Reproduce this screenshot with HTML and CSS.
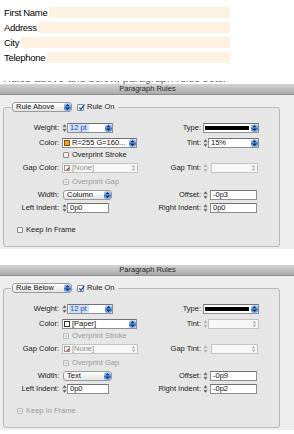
FILE: index.html
```html
<!DOCTYPE html>
<html>
<head>
<meta charset="utf-8">
<title>Paragraph Rules</title>
<link rel="stylesheet" href="styles.css">
</head>
<body>
<div class="form">
  <div class="frow"><span class="flabel">First Name</span><span class="ffield"></span></div>
  <div class="frow"><span class="flabel">Address</span><span class="ffield"></span></div>
  <div class="frow"><span class="flabel">City</span><span class="ffield"></span></div>
  <div class="frow"><span class="flabel">Telephone</span><span class="ffield"></span></div>
</div>
<div class="cutline"><span>Rules above and below, paragraph rules settings for the form</span></div>

<section class="dialog">
  <div class="titlebar">Paragraph Rules</div>
  <div class="dbody">
    <fieldset class="group">
      <legend class="legend"><div class="legend-in">
        <span class="popup w-rule"><span class="ptext">Rule Above</span><span class="stepper"><svg viewBox="0 0 7 8" width="7" height="8"><path d="M3.5 1L5.6 3.3H1.4Z M3.5 7L5.6 4.7H1.4Z" fill="#0e2656"/></svg></span></span>
        <span class="cb cb-big"><svg viewBox="0 0 7 7" width="7" height="7"><path d="M1.3 3.4L2.9 5.4L6.4 0.6" stroke="#1d56ba" stroke-width="1.3" fill="none"/></svg></span><span class="cbl">Rule On</span>
      </div></legend>
      <div class="grid">
        <span class="lbl">Weight:</span>
        <div class="ctl"><svg class="spin" viewBox="0 0 5 10" width="5" height="10"><path d="M2.5 1.2L4.4 3.7H0.6Z M2.5 8.8L4.4 6.3H0.6Z" fill="#555"/><path d="M0 5H5" stroke="#aaa" stroke-width="0.6"/></svg><span class="field w-46"><span class="sel">12 pt</span><span class="stepper"><svg viewBox="0 0 7 8" width="7" height="8"><path d="M3.5 1L5.6 3.3H1.4Z M3.5 7L5.6 4.7H1.4Z" fill="#0e2656"/></svg></span></span></div>
        <span class="lbl r">Type:</span>
        <div class="ctl"><span class="field w-56"><span class="typeline"></span><span class="stepper"><svg viewBox="0 0 7 8" width="7" height="8"><path d="M3.5 1L5.6 3.3H1.4Z M3.5 7L5.6 4.7H1.4Z" fill="#0e2656"/></svg></span></span></div>

        <span class="lbl">Color:</span>
        <div class="ctl"><span class="field w-75"><span class="swatch sw-orange"></span><span class="ftext">R=255 G=160...</span><span class="stepper"><svg viewBox="0 0 7 8" width="7" height="8"><path d="M3.5 1L5.6 3.3H1.4Z M3.5 7L5.6 4.7H1.4Z" fill="#0e2656"/></svg></span></span></div>
        <span class="lbl r">Tint:</span>
        <div class="ctl"><svg class="spin" viewBox="0 0 5 10" width="5" height="10"><path d="M2.5 1.2L4.4 3.7H0.6Z M2.5 8.8L4.4 6.3H0.6Z" fill="#555"/><path d="M0 5H5" stroke="#aaa" stroke-width="0.6"/></svg><span class="field w-50"><span class="ftext">15%</span><span class="stepper"><svg viewBox="0 0 7 8" width="7" height="8"><path d="M3.5 1L5.6 3.3H1.4Z M3.5 7L5.6 4.7H1.4Z" fill="#0e2656"/></svg></span></span></div>

        <div class="chk rowspan"><span class="cb"></span><span class="cbl">Overprint Stroke</span></div>

        <span class="lbl">Gap Color:</span>
        <div class="ctl"><span class="field dis w-76"><span class="swatch sw-none"><svg viewBox="0 0 6 6" width="6" height="6"><path d="M0.3 5.7L5.7 0.3" stroke="#e0262b" stroke-width="1.4"/></svg></span><span class="ftext">[None]</span><svg class="dstep" viewBox="0 0 5 8" width="5" height="8"><path d="M2.5 1L4.2 3.2H0.8Z M2.5 7L4.2 4.8H0.8Z" fill="#a5a5a5"/></svg></span></div>
        <span class="lbl r">Gap Tint:</span>
        <div class="ctl"><svg class="spin" viewBox="0 0 5 10" width="5" height="10"><path d="M2.5 1.2L4.4 3.7H0.6Z M2.5 8.8L4.4 6.3H0.6Z" fill="#aaa"/><path d="M0 5H5" stroke="#ccc" stroke-width="0.6"/></svg><span class="field dis w-47 ml3"><span class="ftext"></span><svg class="dstep" viewBox="0 0 5 8" width="5" height="8"><path d="M2.5 1L4.2 3.2H0.8Z M2.5 7L4.2 4.8H0.8Z" fill="#a5a5a5"/></svg></span></div>

        <div class="chk rowspan disabled"><span class="cb cb-dis"><svg viewBox="0 0 6 6" width="6" height="6"><path d="M1.5 3H4.5" stroke="#a0a0a0" stroke-width="0.8"/></svg></span><span class="cbl">Overprint Gap</span></div>

        <span class="lbl">Width:</span>
        <div class="ctl"><span class="popup w-49"><span class="ptext">Column</span><span class="stepper"><svg viewBox="0 0 7 8" width="7" height="8"><path d="M3.5 1L5.6 3.3H1.4Z M3.5 7L5.6 4.7H1.4Z" fill="#0e2656"/></svg></span></span></div>
        <span class="lbl r">Offset:</span>
        <div class="ctl"><svg class="spin" viewBox="0 0 5 10" width="5" height="10"><path d="M2.5 1.2L4.4 3.7H0.6Z M2.5 8.8L4.4 6.3H0.6Z" fill="#555"/><path d="M0 5H5" stroke="#aaa" stroke-width="0.6"/></svg><span class="field w-47 ml2"><span class="ftext">-0p3</span></span></div>

        <span class="lbl">Left Indent:</span>
        <div class="ctl"><svg class="spin" viewBox="0 0 5 10" width="5" height="10"><path d="M2.5 1.2L4.4 3.7H0.6Z M2.5 8.8L4.4 6.3H0.6Z" fill="#555"/><path d="M0 5H5" stroke="#aaa" stroke-width="0.6"/></svg><span class="field w-42"><span class="ftext">0p0</span></span></div>
        <span class="lbl r">Right Indent:</span>
        <div class="ctl"><svg class="spin" viewBox="0 0 5 10" width="5" height="10"><path d="M2.5 1.2L4.4 3.7H0.6Z M2.5 8.8L4.4 6.3H0.6Z" fill="#555"/><path d="M0 5H5" stroke="#aaa" stroke-width="0.6"/></svg><span class="field w-47 ml2"><span class="ftext">0p0</span></span></div>
      </div>
      <div class="keep"><span class="cb"></span><span class="cbl">Keep In Frame</span></div>
    </fieldset>
  </div>
</section>

<section class="dialog second">
  <div class="titlebar">Paragraph Rules</div>
  <div class="dbody">
    <fieldset class="group">
      <legend class="legend"><div class="legend-in">
        <span class="popup w-rule"><span class="ptext">Rule Below</span><span class="stepper"><svg viewBox="0 0 7 8" width="7" height="8"><path d="M3.5 1L5.6 3.3H1.4Z M3.5 7L5.6 4.7H1.4Z" fill="#0e2656"/></svg></span></span>
        <span class="cb cb-big"><svg viewBox="0 0 7 7" width="7" height="7"><path d="M1.3 3.4L2.9 5.4L6.4 0.6" stroke="#1d56ba" stroke-width="1.3" fill="none"/></svg></span><span class="cbl">Rule On</span>
      </div></legend>
      <div class="grid">
        <span class="lbl">Weight:</span>
        <div class="ctl"><svg class="spin" viewBox="0 0 5 10" width="5" height="10"><path d="M2.5 1.2L4.4 3.7H0.6Z M2.5 8.8L4.4 6.3H0.6Z" fill="#555"/><path d="M0 5H5" stroke="#aaa" stroke-width="0.6"/></svg><span class="field w-46"><span class="sel">12 pt</span><span class="stepper"><svg viewBox="0 0 7 8" width="7" height="8"><path d="M3.5 1L5.6 3.3H1.4Z M3.5 7L5.6 4.7H1.4Z" fill="#0e2656"/></svg></span></span></div>
        <span class="lbl r">Type:</span>
        <div class="ctl"><span class="field w-56"><span class="typeline"></span><span class="stepper"><svg viewBox="0 0 7 8" width="7" height="8"><path d="M3.5 1L5.6 3.3H1.4Z M3.5 7L5.6 4.7H1.4Z" fill="#0e2656"/></svg></span></span></div>

        <span class="lbl">Color:</span>
        <div class="ctl"><span class="field w-75"><span class="swatch sw-paper"></span><span class="ftext">[Paper]</span><span class="stepper"><svg viewBox="0 0 7 8" width="7" height="8"><path d="M3.5 1L5.6 3.3H1.4Z M3.5 7L5.6 4.7H1.4Z" fill="#0e2656"/></svg></span></span></div>
        <span class="lbl r">Tint:</span>
        <div class="ctl"><svg class="spin" viewBox="0 0 5 10" width="5" height="10"><path d="M2.5 1.2L4.4 3.7H0.6Z M2.5 8.8L4.4 6.3H0.6Z" fill="#aaa"/><path d="M0 5H5" stroke="#ccc" stroke-width="0.6"/></svg><span class="field dis w-50"><span class="ftext"></span><svg class="dstep" viewBox="0 0 5 8" width="5" height="8"><path d="M2.5 1L4.2 3.2H0.8Z M2.5 7L4.2 4.8H0.8Z" fill="#a5a5a5"/></svg></span></div>

        <div class="chk rowspan disabled"><span class="cb cb-dis"><svg viewBox="0 0 6 6" width="6" height="6"><path d="M1.5 3H4.5" stroke="#a0a0a0" stroke-width="0.8"/></svg></span><span class="cbl">Overprint Stroke</span></div>

        <span class="lbl">Gap Color:</span>
        <div class="ctl"><span class="field dis w-76"><span class="swatch sw-none"><svg viewBox="0 0 6 6" width="6" height="6"><path d="M0.3 5.7L5.7 0.3" stroke="#e0262b" stroke-width="1.4"/></svg></span><span class="ftext">[None]</span><svg class="dstep" viewBox="0 0 5 8" width="5" height="8"><path d="M2.5 1L4.2 3.2H0.8Z M2.5 7L4.2 4.8H0.8Z" fill="#a5a5a5"/></svg></span></div>
        <span class="lbl r">Gap Tint:</span>
        <div class="ctl"><svg class="spin" viewBox="0 0 5 10" width="5" height="10"><path d="M2.5 1.2L4.4 3.7H0.6Z M2.5 8.8L4.4 6.3H0.6Z" fill="#aaa"/><path d="M0 5H5" stroke="#ccc" stroke-width="0.6"/></svg><span class="field dis w-47 ml3"><span class="ftext"></span><svg class="dstep" viewBox="0 0 5 8" width="5" height="8"><path d="M2.5 1L4.2 3.2H0.8Z M2.5 7L4.2 4.8H0.8Z" fill="#a5a5a5"/></svg></span></div>

        <div class="chk rowspan disabled"><span class="cb cb-dis"><svg viewBox="0 0 6 6" width="6" height="6"><path d="M1.5 3H4.5" stroke="#a0a0a0" stroke-width="0.8"/></svg></span><span class="cbl">Overprint Gap</span></div>

        <span class="lbl">Width:</span>
        <div class="ctl"><span class="popup w-49"><span class="ptext">Text</span><span class="stepper"><svg viewBox="0 0 7 8" width="7" height="8"><path d="M3.5 1L5.6 3.3H1.4Z M3.5 7L5.6 4.7H1.4Z" fill="#0e2656"/></svg></span></span></div>
        <span class="lbl r">Offset:</span>
        <div class="ctl"><svg class="spin" viewBox="0 0 5 10" width="5" height="10"><path d="M2.5 1.2L4.4 3.7H0.6Z M2.5 8.8L4.4 6.3H0.6Z" fill="#555"/><path d="M0 5H5" stroke="#aaa" stroke-width="0.6"/></svg><span class="field w-47 ml2"><span class="ftext">-0p9</span></span></div>

        <span class="lbl">Left Indent:</span>
        <div class="ctl"><svg class="spin" viewBox="0 0 5 10" width="5" height="10"><path d="M2.5 1.2L4.4 3.7H0.6Z M2.5 8.8L4.4 6.3H0.6Z" fill="#555"/><path d="M0 5H5" stroke="#aaa" stroke-width="0.6"/></svg><span class="field w-42"><span class="ftext">0p0</span></span></div>
        <span class="lbl r">Right Indent:</span>
        <div class="ctl"><svg class="spin" viewBox="0 0 5 10" width="5" height="10"><path d="M2.5 1.2L4.4 3.7H0.6Z M2.5 8.8L4.4 6.3H0.6Z" fill="#555"/><path d="M0 5H5" stroke="#aaa" stroke-width="0.6"/></svg><span class="field w-47 ml2"><span class="ftext">-0p2</span></span></div>
      </div>
      <div class="keep disabled"><span class="cb cb-dis"><svg viewBox="0 0 6 6" width="6" height="6"><path d="M1.5 3H4.5" stroke="#a0a0a0" stroke-width="0.8"/></svg></span><span class="cbl">Keep In Frame</span></div>
    </fieldset>
  </div>
</section>
</body>
</html>
```

FILE: styles.css
```css
* { box-sizing: border-box; }
html, body { margin: 0; padding: 0; }
body {
  background: #fff;
  font-family: "Liberation Sans", Arial, sans-serif;
  width: 294px;
  height: 434px;
  overflow: hidden;
}

/* top form */
.form {
  padding: 7px 0 0 4px;
  width: 230px;
  display: flex;
  flex-direction: column;
  gap: 4px;
}
.frow { display: flex; height: 11px; align-items: center; gap: 2px; }
.flabel {
  font-size: 9.5px;
  letter-spacing: -0.3px;
  line-height: 11px;
  color: #000;
  white-space: nowrap;
}
.ffield { flex: 1; height: 11px; background: #fdf1e1; }

/* clipped line of text above the first dialog */
.cutline {
  margin-top: 18px;
  height: 3px;
  width: 228px;
  overflow: hidden;
  padding-left: 3px;
}
.cutline span {
  display: block;
  height: 14px;
  font-size: 11px;
  line-height: 11px;
  margin-top: -8px;
  color: #666;
  white-space: nowrap;
}

/* dialog */
.dialog { background: #eeeeee; }
.dialog.second { margin-top: 16px; }
.titlebar {
  height: 11px;
  background: linear-gradient(#d4d4d4, #aaaaaa);
  border-bottom: 1px solid #8c8c8c;
  font-size: 7.5px;
  line-height: 10px;
  text-align: center;
  color: #1e1e1e;
  padding-left: 1px;
}
.dbody { padding: 7px 14px 2px 3px; }
.group {
  margin: 0;
  padding: 0 0 12px 0;
  border: 1px solid #b8b8b8;
  border-radius: 3px;
  background: #e6e6e6;
  min-width: 0;
}
.legend { margin-left: 7px; padding: 0 3px 0 1px; height: 10px; }
.legend-in { display: flex; align-items: center; height: 10px; font-size: 7.5px; color: #1a1a1a; }

/* popup buttons */
.popup {
  display: flex;
  align-items: center;
  height: 10px;
  border: 1px solid #9b9b9b;
  border-radius: 3px;
  background: linear-gradient(#ffffff, #e4e4e4);
  font-size: 7.5px;
  color: #141414;
  padding-left: 3px;
}
.w-rule { width: 60px; margin-left: 0; }
.w-49 { width: 49px; margin-left: 1px; }
.ptext { line-height: 8px; white-space: nowrap; }

.stepper {
  display: block;
  width: 7px;
  height: 8px;
  margin-left: auto;
  margin-right: 0;
  border-radius: 2px;
  background: linear-gradient(#c4ddf8, #6ea3e8 45%, #3f7ad5 55%, #8cbcf0);
}
.stepper svg { display: block; }

/* checkboxes */
.cb {
  display: inline-block;
  width: 6px;
  height: 6px;
  border: 1px solid #8a8a8a;
  border-radius: 1px;
  background: linear-gradient(#ffffff, #ececec);
  flex: none;
}
.cb svg { display: block; margin: -1px 0 0 -1px; }
.cb-big { width: 7px; height: 7px; margin-left: 5px; }
.cb-big svg { margin: -1px 0 0 -0.5px; overflow: visible; }
.cb-dis { border-color: #b9b9b9; background: #f1f1f1; }
.cbl { margin-left: 3px; font-size: 7.5px; line-height: 8px; white-space: nowrap; }
.disabled .cbl { color: #9a9a9a; }

/* grid of fields */
.grid {
  display: grid;
  grid-template-columns: 58px 78px 63px 56px;
  grid-template-rows: 15px 12px 13px 14px 13px 13px 10px;
  margin-top: 11px;
  font-size: 7.5px;
  color: #202020;
}
.lbl {
  text-align: right;
  padding-right: 3px;
  line-height: 10px;
  white-space: nowrap;
}
.lbl.r { padding-right: 2px; }
.ctl { display: flex; align-items: flex-start; height: 10px; }
.chk {
  display: flex;
  align-items: center;
  height: 10px;
  padding-left: 1px;
}
.rowspan { grid-column: 2 / -1; }

.spin { display: block; flex: none; }

.field {
  display: flex;
  align-items: center;
  height: 10px;
  border: 1px solid #8e8e8e;
  border-top-color: #727272;
  background: #fff;
  color: #111;
  font-size: 7.5px;
  padding-left: 1px;
}
.field.dis { border-color: #c2c2c2; background: #f7f7f7; color: #8e8e8e; }
.w-42 { width: 42px; }
.w-46 { width: 46px; }
.w-47 { width: 47px; }
.w-50 { width: 51px; }
.w-56 { width: 56px; }
.w-75 { width: 75px; }
.w-76 { width: 76px; }
.ml2 { margin-left: 2px; }
.ml3 { margin-left: 3px; }
.ftext { line-height: 8px; white-space: nowrap; padding-left: 1px; }
.sel {
  line-height: 8px;
  padding: 0 2px 0 1px;
  background: #cfe0f8;
  color: #2450b0;
  white-space: nowrap;
}
.dstep { display: block; margin-left: auto; margin-right: 1px; }
.typeline { display: block; width: 44px; height: 4px; background: #000; }

.swatch {
  display: block;
  flex: none;
  width: 6px;
  height: 6px;
  margin-right: 1px;
  border: 0.5px solid #555;
}
.swatch svg { display: block; }
.sw-orange { background: #f2a126; border-color: #8a5500; }
.sw-paper { background: #fff; border-color: #333; }
.sw-none { background: #fff; border-color: #999; overflow: hidden; }
.sw-none svg { margin: -0.5px; }

.keep {
  display: flex;
  align-items: center;
  height: 8px;
  margin: 13px 0 0 13px;
  font-size: 7.5px;
  color: #202020;
}
```
